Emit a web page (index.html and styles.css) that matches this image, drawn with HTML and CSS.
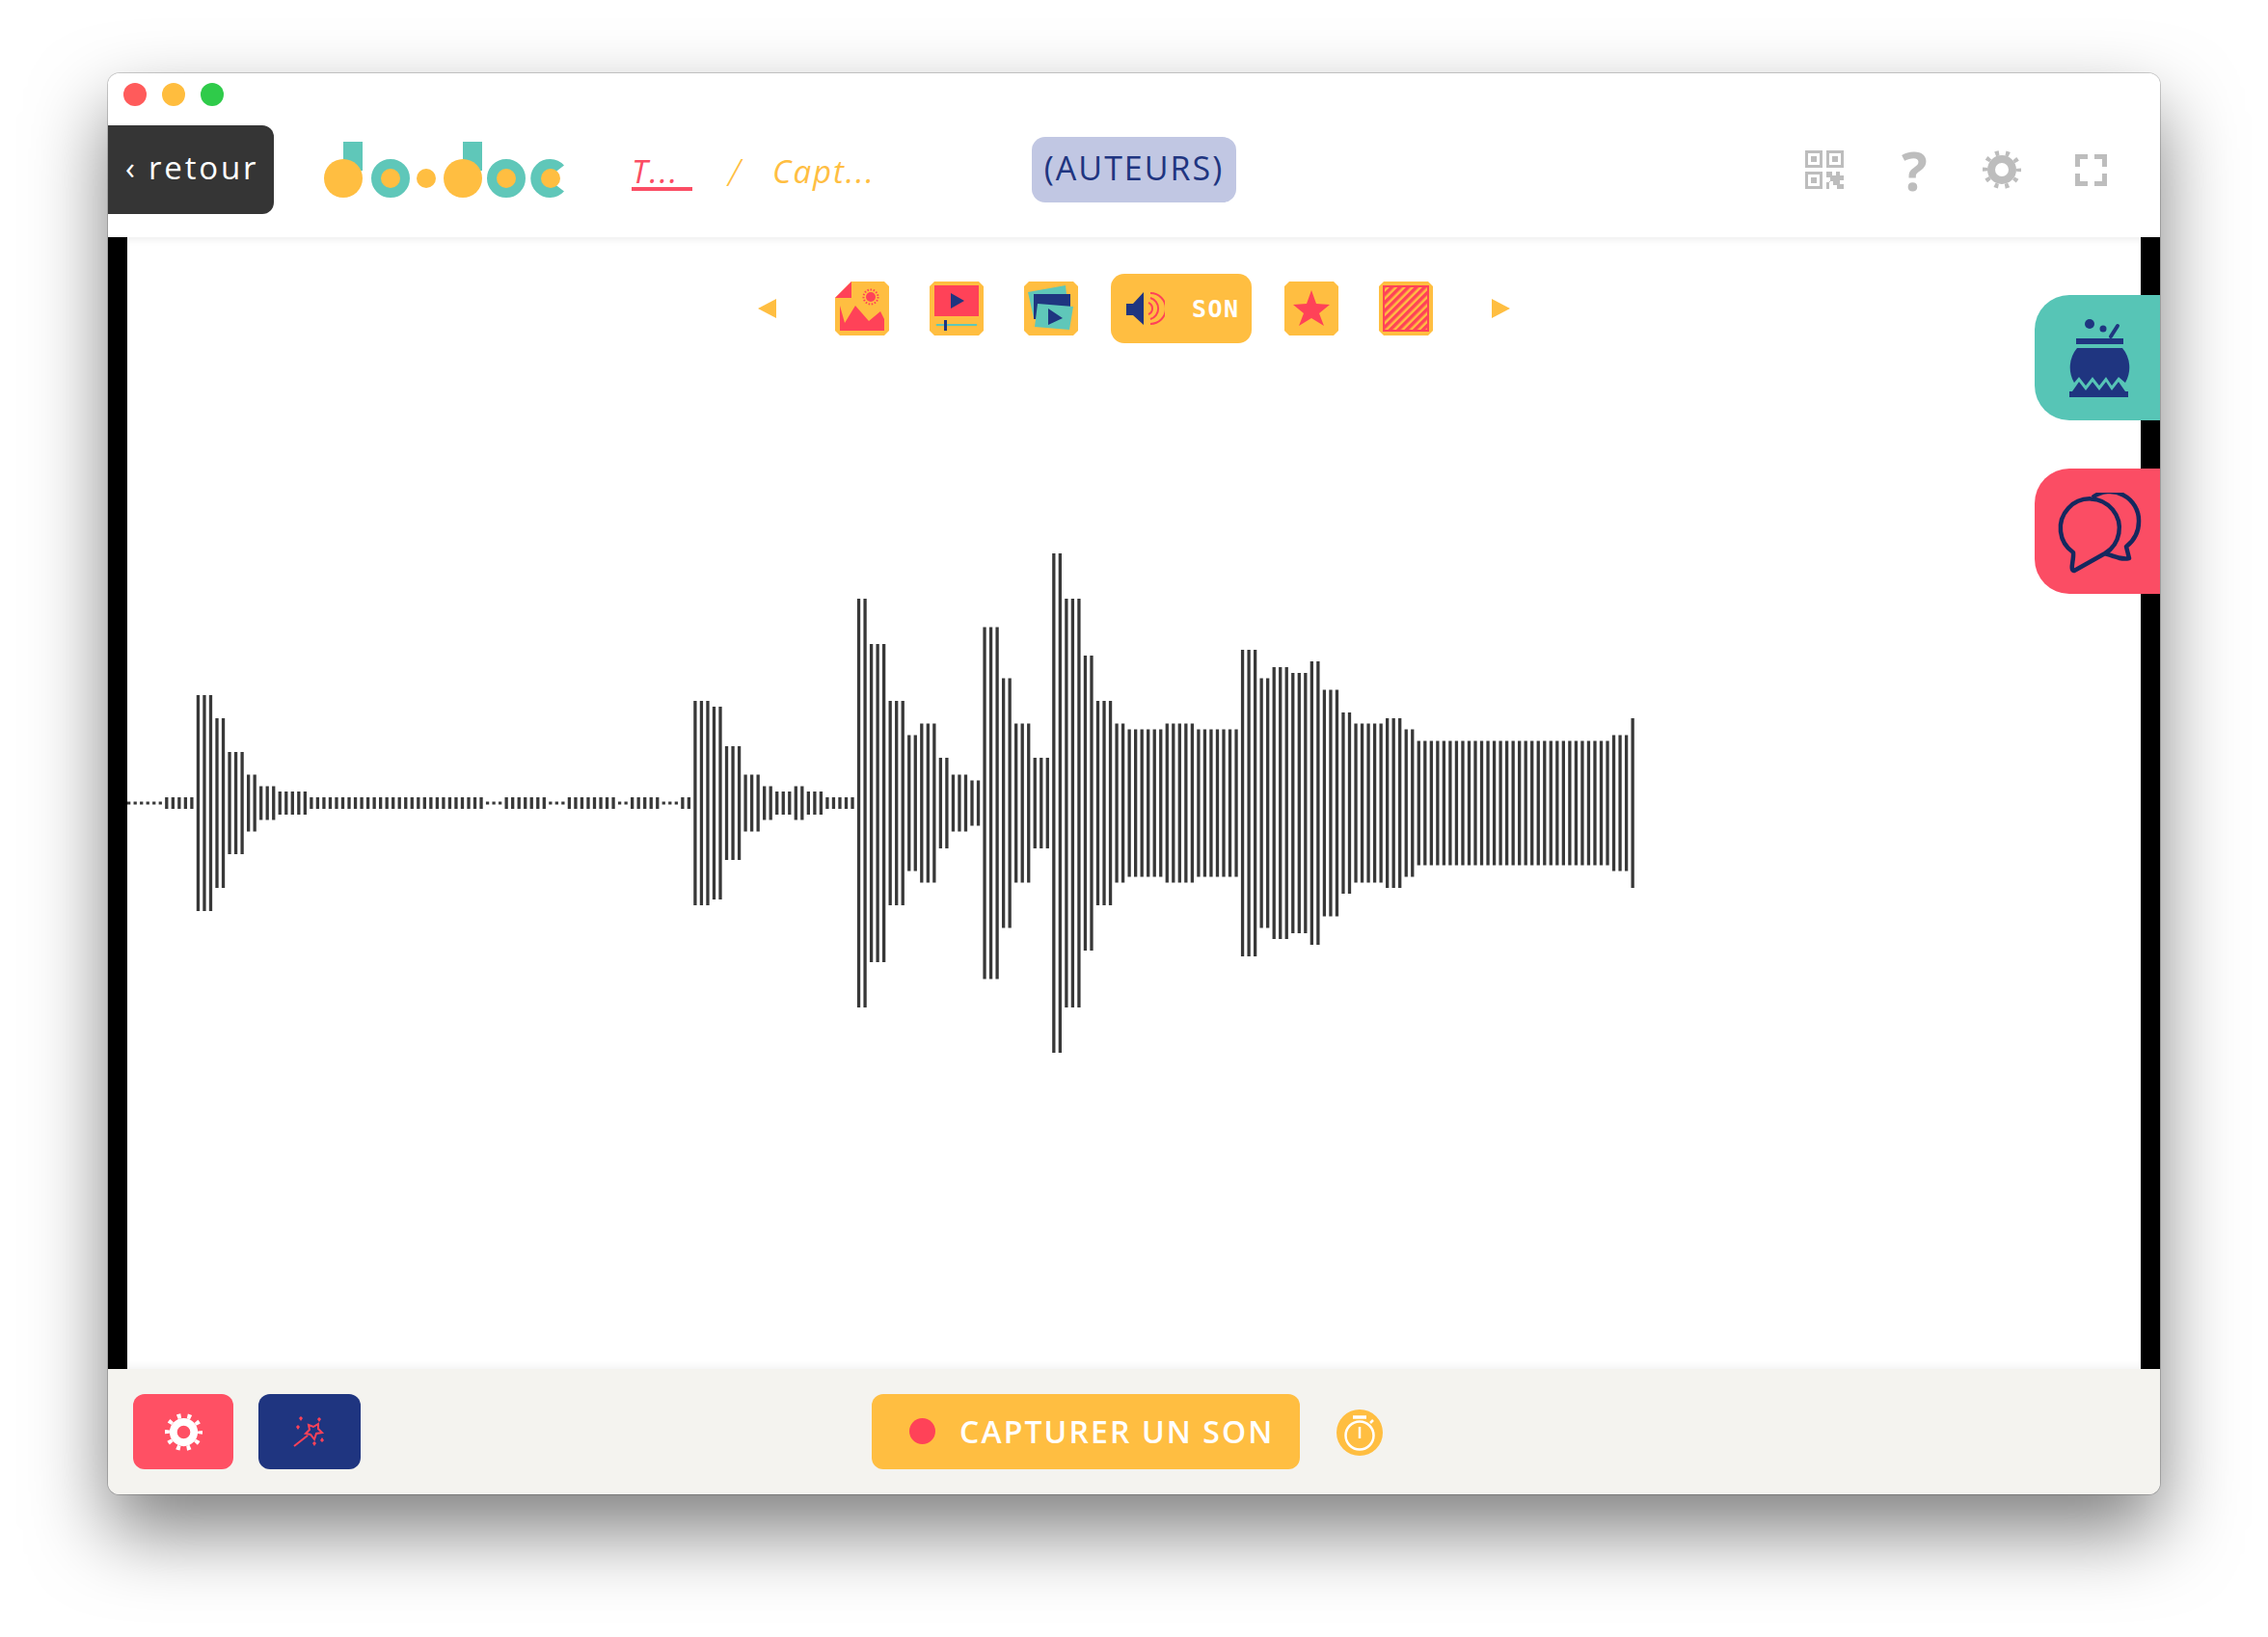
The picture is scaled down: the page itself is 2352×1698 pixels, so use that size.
FILE: index.html
```html
<!doctype html>
<html lang="fr">
  <head>
    <title>do•doc</title>
    <link rel="stylesheet" href="styles.css">
  </head>
  <body>
    <svg class="defs" width="0" height="0">
      <symbol id="gear" viewBox="0 0 40 40">
        <circle cx="20" cy="20" r="17.5" fill="none" stroke="currentColor" stroke-width="5" stroke-dasharray="4 6.995" stroke-dashoffset="2"/>
        <circle cx="20" cy="20" r="11" fill="none" stroke="currentColor" stroke-width="8"/>
      </symbol>
    </svg>

    <div id="window">
      <div id="title-bar">
        <span class="light light-red"></span>
        <span class="light light-yellow"></span>
        <span class="light light-green"></span>
      </div>

      <header id="top-bar">
        <button class="back-button">‹ retour</button>

        <svg class="logo" width="250" height="58" viewBox="0 0 250 58">
          <rect x="20" y="0" width="20" height="30" fill="#5fc7b9"/>
          <circle cx="20" cy="38" r="20" fill="#ffbe41"/>
          <circle cx="69" cy="38" r="15" fill="#ffbe41" stroke="#5fc7b9" stroke-width="10"/>
          <circle cx="106" cy="38" r="10" fill="#ffbe41"/>
          <rect x="144" y="0" width="20" height="30" fill="#5fc7b9"/>
          <circle cx="144" cy="38" r="20" fill="#ffbe41"/>
          <circle cx="189" cy="38" r="15" fill="#ffbe41" stroke="#5fc7b9" stroke-width="10"/>
          <path d="M249 24.5A20 20 0 1 0 249 51.5L240 44.500V31.500Z" fill="#5fc7b9"/>
          <circle cx="235" cy="38" r="10" fill="#ffbe41"/>
        </svg>

        <nav class="breadcrumb">
          <span class="crumb crumb-project">T...</span>
          <span class="crumb-sep">/</span>
          <span class="crumb crumb-mode">Capt...</span>
        </nav>

        <button class="authors">(AUTEURS)</button>

        <div class="top-icons">
          <svg class="top-icon" width="40" height="40" viewBox="0 0 40 40" fill="#bdbdbd">
            <path fill-rule="evenodd" d="M0 0H18V18H0ZM3 3V15H15V3ZM6 6H12V12H6Z"/>
            <path fill-rule="evenodd" d="M22 0H40V18H22ZM25 3V15H37V3ZM28 6H34V12H28Z"/>
            <path fill-rule="evenodd" d="M0 22H18V40H0ZM3 25V37H15V25ZM6 28H12V34H6Z"/>
            <path d="M22 22H28V26H32V22H36V26H40V31H36V35H40V40H33V36H29V32H25V40H22V33H26V28H22Z"/>
          </svg>
          <span class="help-icon">?</span>
          <svg class="top-icon gear-icon" width="40" height="40"><use href="#gear"/></svg>
          <svg class="top-icon" width="33" height="33" viewBox="0 0 33 33" fill="#bdbdbd">
            <path d="M0 0H13V5H5V13H0ZM20 0H33V13H28V5H20ZM0 20H5V28H13V33H0ZM28 20H33V33H20V28H28Z"/>
          </svg>
        </div>
      </header>

      <main id="content">
        <div id="stage">
          <div class="mode-menu">
            <span class="arrow arrow-left"></span>

            <svg class="mode" width="56" height="56" viewBox="0 0 56 56">
              <path d="M17 0H51L56 5V51L51 56H5L0 51V17Z" fill="#ffbe41"/>
              <path d="M0 17L17 0V17Z" fill="#ff4258"/>
              <circle cx="37" cy="16" r="5" fill="#ff4258"/>
              <circle cx="37" cy="16" r="7.500" fill="none" stroke="#ff4258" stroke-width="2" stroke-dasharray="1.500 1.650"/>
              <path d="M5 25L10 43L21 25L35 41L47 31L51 39V51H5Z" fill="#ff4258"/>
            </svg>

            <svg class="mode" width="56" height="56" viewBox="0 0 56 56">
              <path d="M5 0H51L56 5V51L51 56H5L0 51V5Z" fill="#ffbe41"/>
              <rect x="5" y="4" width="46" height="32" fill="#ff4258"/>
              <path d="M22 12L36 20L22 28Z" fill="#1f3580"/>
              <rect x="7" y="44" width="42" height="2" fill="#5fc7b9"/>
              <rect x="15" y="40" width="3" height="11" fill="#1f3580"/>
            </svg>

            <svg class="mode" width="56" height="56" viewBox="0 0 56 56">
              <path d="M5 0H51L56 5V51L51 56H5L0 51V5Z" fill="#ffbe41"/>
              <path d="M4 11L43 4L46 32L10 38Z" fill="#5fc7b9"/>
              <rect x="10" y="13" width="38" height="26" fill="#1f3580"/>
              <path d="M14 23L51 26L47 50L11 47Z" fill="#5fc7b9"/>
              <path d="M25 28L40 38L25 45Z" fill="#1f3580"/>
            </svg>

            <button class="mode-active">
              <svg width="48" height="48" viewBox="0 0 48 48" fill="none">
                <path d="M8 19H15L26 7V41L15 31H8Z" fill="#1f3580"/>
                <path d="M31 18A6.500 6.500 0 0 1 31 30M33 13A11.500 11.500 0 0 1 33 35M33 8A16 16 0 0 1 33 40" stroke="#ff4258" stroke-width="2"/>
              </svg>
              <span class="mode-label">SON</span>
            </button>

            <svg class="mode" width="56" height="56" viewBox="0 0 56 56">
              <path d="M5 0H51L56 5V51L51 56H5L0 51V5Z" fill="#ffbe41"/>
              <path d="M28 9L33 23L47 24L36 33L41 46L28 38L15 46L20 33L9 24L23 23Z" fill="#ff4258"/>
            </svg>

            <svg class="mode" width="56" height="56" viewBox="0 0 56 56">
              <defs>
                <pattern id="hatch" width="6" height="6" patternUnits="userSpaceOnUse" patternTransform="rotate(45)">
                  <rect width="6" height="6" fill="#ffbe41"/>
                  <rect width="3.500" height="6" fill="#ff4258"/>
                </pattern>
              </defs>
              <path d="M5 0H51L56 5V51L51 56H5L0 51V5Z" fill="#ffbe41"/>
              <rect x="5" y="5" width="46" height="46" fill="url(#hatch)" stroke="#ff4258" stroke-width="2"/>
            </svg>

            <span class="arrow arrow-right"></span>
          </div>

          <div class="waveform" id="waveform"></div>

          <button class="side-tab side-tab-teal">
            <svg width="66" height="82" viewBox="0 0 66 82" fill="#1f3580">
              <circle cx="23" cy="6" r="5"/>
              <circle cx="37" cy="11" r="3.500"/>
              <path d="M45 19L52 8" stroke="#1f3580" stroke-width="4" stroke-linecap="round" fill="none"/>
              <rect x="9" y="21" width="49" height="6"/>
              <path d="M10 31H57A31.500 31.500 0 0 1 60 67L53 61L46 70L40 61L33 70L26 61L19 70L12 61L7 67A31.500 31.500 0 0 1 10 31Z"/>
              <path d="M2 82V76H5L12 66L19 75L26 66L33 75L40 66L46 75L53 66L60 76H63V82Z"/>
            </svg>
          </button>

          <button class="side-tab side-tab-red">
            <svg width="92" height="86" viewBox="0 0 92 86" fill="none" stroke="#15285e" stroke-width="4.500" stroke-linejoin="round">
              <path d="M40 5A30 30 0 0 1 88 30C88 41 84 49 75 56L78 68C70 70 62 66 53 63"/>
              <path d="M20 62A30.500 30.500 0 1 1 53 63L21 81C16 80 21 70 20 62Z"/>
            </svg>
          </button>
        </div>
      </main>

      <footer id="bottom-bar">
        <button class="tool-button tool-red">
          <svg class="gear-white" width="39" height="39"><use href="#gear"/></svg>
        </button>
        <button class="tool-button tool-navy">
          <svg width="34" height="32" viewBox="0 0 34 32" fill="#ff4258">
            <path d="M16 9L21 11L26 8L26 13L30 17L24 18L22 24L18 19L13 18L17 14Z" fill="none" stroke="#ff4258" stroke-width="2"/>
            <path d="M15 20L1 31" stroke="#ff4258" stroke-width="2"/>
            <path d="M8 0L10 2L8 5L6 2ZM27 1L29 3L27 6L25 3ZM5 9L7 11L5 14L3 11ZM30 22L32 25L30 27L28 25ZM22 26L24 28L22 31L20 28Z"/>
          </svg>
        </button>

        <button class="capture-button">
          <span class="capture-dot"></span>
          <span class="capture-label">CAPTURER UN SON</span>
        </button>

        <button class="timer-button">
          <svg width="48" height="48" viewBox="0 0 48 48" fill="none" stroke="#fff" stroke-width="2.500">
            <circle cx="24" cy="27" r="14.500"/>
            <path d="M24 18V30"/>
            <path d="M17 8H31" stroke-width="3.500"/>
            <path d="M35 14L38 11"/>
          </svg>
        </button>
      </footer>
    </div>

    <script src="waveform.js"></script>
  </body>
</html>
```

FILE: styles.css
```css
body,
html {
  height: 100%;
  margin: 0;
  background-color: #fff;
  overflow: hidden;
  font-family: "Open Sans", "Noto Sans", sans-serif;
}

button {
  border: none;
  padding: 0;
  font-family: inherit;
  cursor: pointer;
}

.defs {
  display: block;
  height: 0;
}

#window {
  width: 2128px;
  height: 1474px;
  margin: 76px 0 0 112px;
  display: flex;
  flex-direction: column;
  background-color: #fff;
  border-radius: 12px;
  overflow: hidden;
  box-shadow: 0 0 0 1px rgba(0, 0, 0, 0.18);
}

/* overflow hidden cuts the shadow, so the shadow sits on a pseudo layer of the body */
body::before {
  content: "";
  position: absolute;
  top: 76px;
  left: 112px;
  width: 2128px;
  height: 1474px;
  border-radius: 12px;
  box-shadow: 0 38px 80px 0 rgba(0, 0, 0, 0.5);
}

#window > * {
  position: relative;
}

#title-bar {
  height: 54px;
  flex: none;
  z-index: 3;
  display: flex;
  align-items: center;
  gap: 16px;
  padding: 0 16px;
  box-sizing: border-box;
  padding-bottom: 11px;
  background-color: #fff;
}

.light {
  width: 24px;
  height: 24px;
  border-radius: 50%;
}

.light-red {
  background-color: #ff5b5b;
}

.light-yellow {
  background-color: #ffbd3e;
}

.light-green {
  background-color: #2fcb4a;
}

#top-bar {
  height: 116px;
  flex: none;
  box-sizing: border-box;
  padding-bottom: 24px;
  display: flex;
  align-items: flex-start;
  z-index: 2;
  background-color: #fff;
  box-shadow: 0 2px 8px rgba(0, 0, 0, 0.08);
}

.back-button {
  width: 172px;
  height: 92px;
  background-color: #353535;
  color: #fff;
  border-radius: 0 12px 12px 0;
  font-size: 33px;
  letter-spacing: 2.800px;
  text-align: left;
  padding: 0 0 6px 18px;
}

.logo {
  margin: 17px 0 0 52px;
}

.breadcrumb {
  display: flex;
  align-items: flex-start;
  margin: 26px 0 0 69px;
  font-size: 33px;
  font-style: italic;
  letter-spacing: 2px;
  line-height: 44px;
}

.crumb-project {
  width: 63px;
  height: 38px;
  color: #fb4d64;
  border-bottom: 4px solid #fb4d64;
}

.crumb-sep {
  color: #ffbe41;
  margin-left: 37px;
  width: 46px;
  font-size: 38px;
  font-weight: 300;
}

.crumb-mode {
  color: #ffbe41;
}

.authors {
  position: absolute;
  left: 958px;
  top: 12px;
  width: 212px;
  height: 68px;
  padding-bottom: 5px;
  border-radius: 14px;
  background-color: #c1c7e3;
  color: #1f3580;
  font-size: 34px;
  letter-spacing: 2px;
}

.top-icons {
  display: flex;
  align-items: center;
  margin: 26px 55px 0 auto;
}

.help-icon {
  width: 25px;
  height: 40px;
  margin: 0 59px 0 60px;
  color: #bdbdbd;
  font-size: 56px;
  font-weight: 700;
  line-height: 40px;
  text-align: center;
}

.gear-icon {
  color: #bdbdbd;
  margin-right: 56px;
}

#content {
  flex: 1;
  min-height: 0;
  display: flex;
  padding: 0 20px;
  background-color: #000;
}

#stage {
  flex: 1;
  position: relative;
  display: flex;
  align-items: center;
  background-color: #fff;
}

.mode-menu {
  position: absolute;
  top: 38px;
  left: 0;
  right: 0;
  height: 72px;
  display: flex;
  align-items: center;
  justify-content: center;
}

.arrow {
  width: 0;
  height: 0;
  border-top: 10px solid transparent;
  border-bottom: 10px solid transparent;
}

.arrow-left {
  border-right: 19px solid #ffbe41;
  margin-right: 61px;
}

.arrow-right {
  border-left: 19px solid #ffbe41;
  margin-left: 61px;
}

.mode {
  margin-right: 42px;
}

.mode:nth-of-type(3) {
  margin-right: 34px;
}

.mode-active {
  width: 146px;
  height: 72px;
  margin-right: 34px;
  display: flex;
  align-items: center;
  padding-left: 8px;
  background-color: #ffbe41;
  border-radius: 14px;
  color: #fff;
}

.mode-label {
  margin-left: 28px;
  font-family: "DejaVu Sans Mono", monospace;
  font-size: 25px;
  font-weight: 700;
  letter-spacing: 1.500px;
}

.mode:nth-last-of-type(1) {
  margin-right: 0;
}

.waveform {
  line-height: 0;
}

.bar {
  fill: #383838;
}

.side-tab {
  position: absolute;
  right: -20px;
  width: 130px;
  height: 130px;
  display: flex;
  align-items: center;
  border-radius: 36px 0 0 36px;
}

.side-tab-teal {
  top: 60px;
  padding-left: 34px;
  background-color: #57c5b6;
}

.side-tab-red {
  top: 240px;
  padding: 6px 0 0 20px;
  background-color: #fb4d64;
}

#bottom-bar {
  height: 130px;
  flex: none;
  display: flex;
  align-items: center;
  padding-left: 26px;
  background-color: #f4f3ef;
  box-shadow: 0 -2px 8px rgba(0, 0, 0, 0.06);
}

.tool-button {
  height: 78px;
  display: flex;
  align-items: center;
  justify-content: center;
  border-radius: 12px;
}

.tool-red {
  width: 104px;
  margin-right: 26px;
  background-color: #ff5064;
}

.gear-white {
  color: #fff;
}

.tool-navy {
  width: 106px;
  background-color: #1f3580;
}

.capture-button {
  width: 444px;
  height: 78px;
  margin-left: 530px;
  display: flex;
  align-items: center;
  padding: 0 0 2px 39px;
  background-color: #ffbe41;
  border-radius: 12px;
  color: #fff;
}

.capture-dot {
  width: 27px;
  height: 27px;
  border-radius: 50%;
  background-color: #ff4258;
}

.capture-label {
  margin-left: 25px;
  font-size: 32px;
  font-weight: 600;
  letter-spacing: 2.100px;
}

.timer-button {
  width: 48px;
  height: 48px;
  margin-left: 38px;
  margin-top: 2px;
  border-radius: 50%;
  background-color: #ffbe41;
}
```

FILE: waveform.js
```js
// run lengths of the recorded levels: [how many bars, height in px]
const levels = [
  [6, 3], [5, 12], [3, 224], [2, 176], [3, 106], [2, 59], [3, 35], [5, 24],
  [28, 12], [3, 3], [7, 12], [3, 3], [8, 12], [2, 3], [5, 12], [3, 3], [2, 12],
  [3, 212], [2, 200], [3, 118], [3, 59], [2, 35], [3, 24], [2, 35], [3, 24],
  [5, 12], [2, 424], [3, 330], [3, 212], [2, 141], [3, 165], [2, 94], [3, 59],
  [2, 47], [3, 365], [2, 259], [3, 165], [3, 94], [2, 518], [3, 424], [2, 306],
  [3, 212], [2, 165], [6, 153], [5, 165], [7, 153], [3, 318], [2, 259],
  [3, 282], [3, 270], [2, 294], [3, 235], [2, 188], [5, 165], [3, 176],
  [2, 153], [31, 129], [3, 141], [1, 176],
];

const pitch = 6.525;
const barWidth = 3.3;
const height = 520;

let rects = "";
let index = 0;
levels.forEach(function (level) {
  for (let n = 0; n < level[0]; n++) {
    const x = (index * pitch).toFixed(2);
    const y = (height - level[1]) / 2;
    rects += `<rect class="bar" x="${x}" y="${y}" width="${barWidth}" height="${level[1]}"/>`;
    index++;
  }
});

document.getElementById("waveform").innerHTML =
  `<svg width="1570" height="${height}">${rects}</svg>`;
```
